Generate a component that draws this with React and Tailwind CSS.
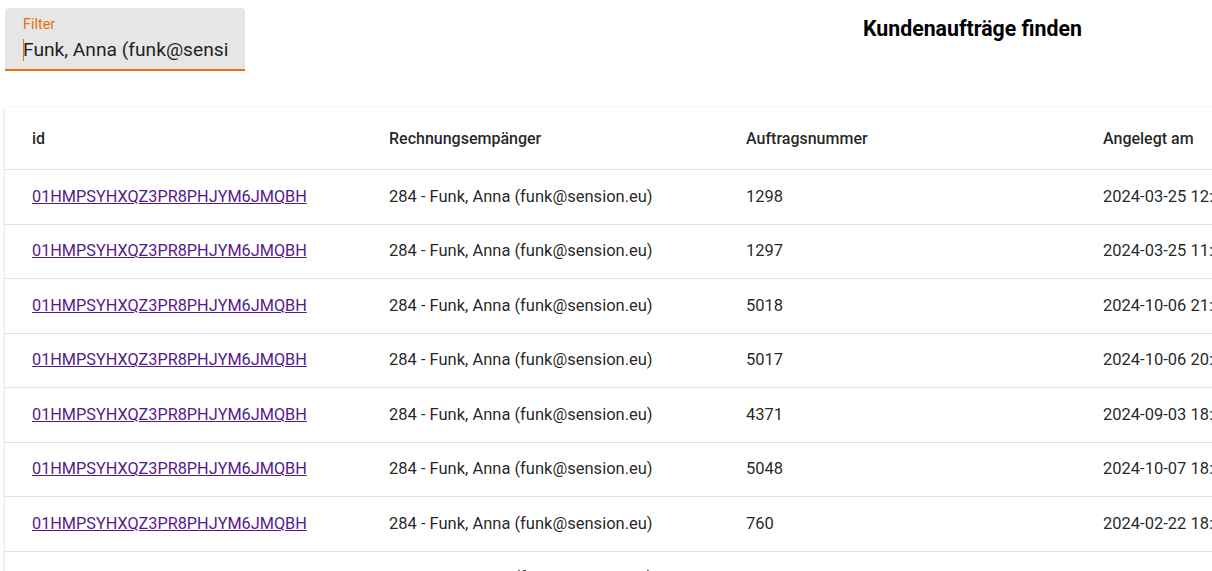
import React from 'react';

const rows = [
  { id: '01HMPSYHXQZ3PR8PHJYM6JMQBH', kunde: '284 - Funk, Anna (funk@sension.eu)', nr: '1298', datum: '2024-03-25 12:41' },
  { id: '01HMPSYHXQZ3PR8PHJYM6JMQBH', kunde: '284 - Funk, Anna (funk@sension.eu)', nr: '1297', datum: '2024-03-25 11:58' },
  { id: '01HMPSYHXQZ3PR8PHJYM6JMQBH', kunde: '284 - Funk, Anna (funk@sension.eu)', nr: '5018', datum: '2024-10-06 21:12' },
  { id: '01HMPSYHXQZ3PR8PHJYM6JMQBH', kunde: '284 - Funk, Anna (funk@sension.eu)', nr: '5017', datum: '2024-10-06 20:47' },
  { id: '01HMPSYHXQZ3PR8PHJYM6JMQBH', kunde: '284 - Funk, Anna (funk@sension.eu)', nr: '4371', datum: '2024-09-03 18:05' },
  { id: '01HMPSYHXQZ3PR8PHJYM6JMQBH', kunde: '284 - Funk, Anna (funk@sension.eu)', nr: '5048', datum: '2024-10-07 18:33' },
  { id: '01HMPSYHXQZ3PR8PHJYM6JMQBH', kunde: '284 - Funk, Anna (funk@sension.eu)', nr: '760', datum: '2024-02-22 18:19' },
  { id: '01HMPSYHXQZ3PR8PHJYM6JMQBH', kunde: '284 - Funk, Anna (funk@sension.eu)', nr: '1300', datum: '2024-03-26 09:10' },
];

function App() {
  return (
    <div className="w-[1212px] h-[571px] overflow-hidden bg-white font-['Roboto',sans-serif] text-[rgba(0,0,0,0.87)]">
      <div className="flex items-start pt-2 pl-[5px]">
        <div className="w-[240px] h-[63px] bg-[#e6e6e6] rounded-t border-b-2 border-[#e8700a] px-[18px] pt-[8px] overflow-hidden">
          <div className="text-[14.4px] leading-[18px] text-[#e8700a]">Filter</div>
          <div className="flex items-center mt-[4px]">
            <span className="w-px h-[22px] bg-[#e8700a] mr-[-1px] shrink-0"></span>
            <span className="text-[19.2px] leading-[24px] text-[#1f1f1f] whitespace-nowrap">Funk, Anna (funk@sensi</span>
          </div>
        </div>
        <h1 className="ml-[618px] mt-[8px] text-[21.3px] leading-[26px] font-bold text-black whitespace-nowrap">
          Kundenaufträge finden
        </h1>
      </div>

      <div className="ml-[5px] mt-[36px] w-[1440px] bg-white shadow-[0_1px_3px_rgba(0,0,0,0.2),0_1px_1px_rgba(0,0,0,0.14)] rounded">
        <div className="flex h-[63px] pt-[2px] items-center border-b border-[#e0e0e0] text-[16px] font-medium">
          <div className="w-[357px] pl-[27px]">id</div>
          <div className="w-[357px] pl-[27px]">Rechnungsempänger</div>
          <div className="w-[357px] pl-[27px]">Auftragsnummer</div>
          <div className="w-[357px] pl-[27px]">Angelegt am</div>
        </div>
        {rows.map((r, i) => (
          <div key={i} className="flex h-[54.5px] pt-[1px] items-center border-b border-[#e0e0e0] text-[16.5px]">
            <div className="w-[357px] pl-[27px]">
              <a href="#" className="underline text-[16.25px] text-[#551a8b]">{r.id}</a>
            </div>
            <div className="w-[357px] pl-[27px]">{r.kunde}</div>
            <div className="w-[357px] pl-[27px]">{r.nr}</div>
            <div className="w-[357px] pl-[27px] whitespace-nowrap">{r.datum}</div>
          </div>
        ))}
      </div>
    </div>
  );
}

export default App;
